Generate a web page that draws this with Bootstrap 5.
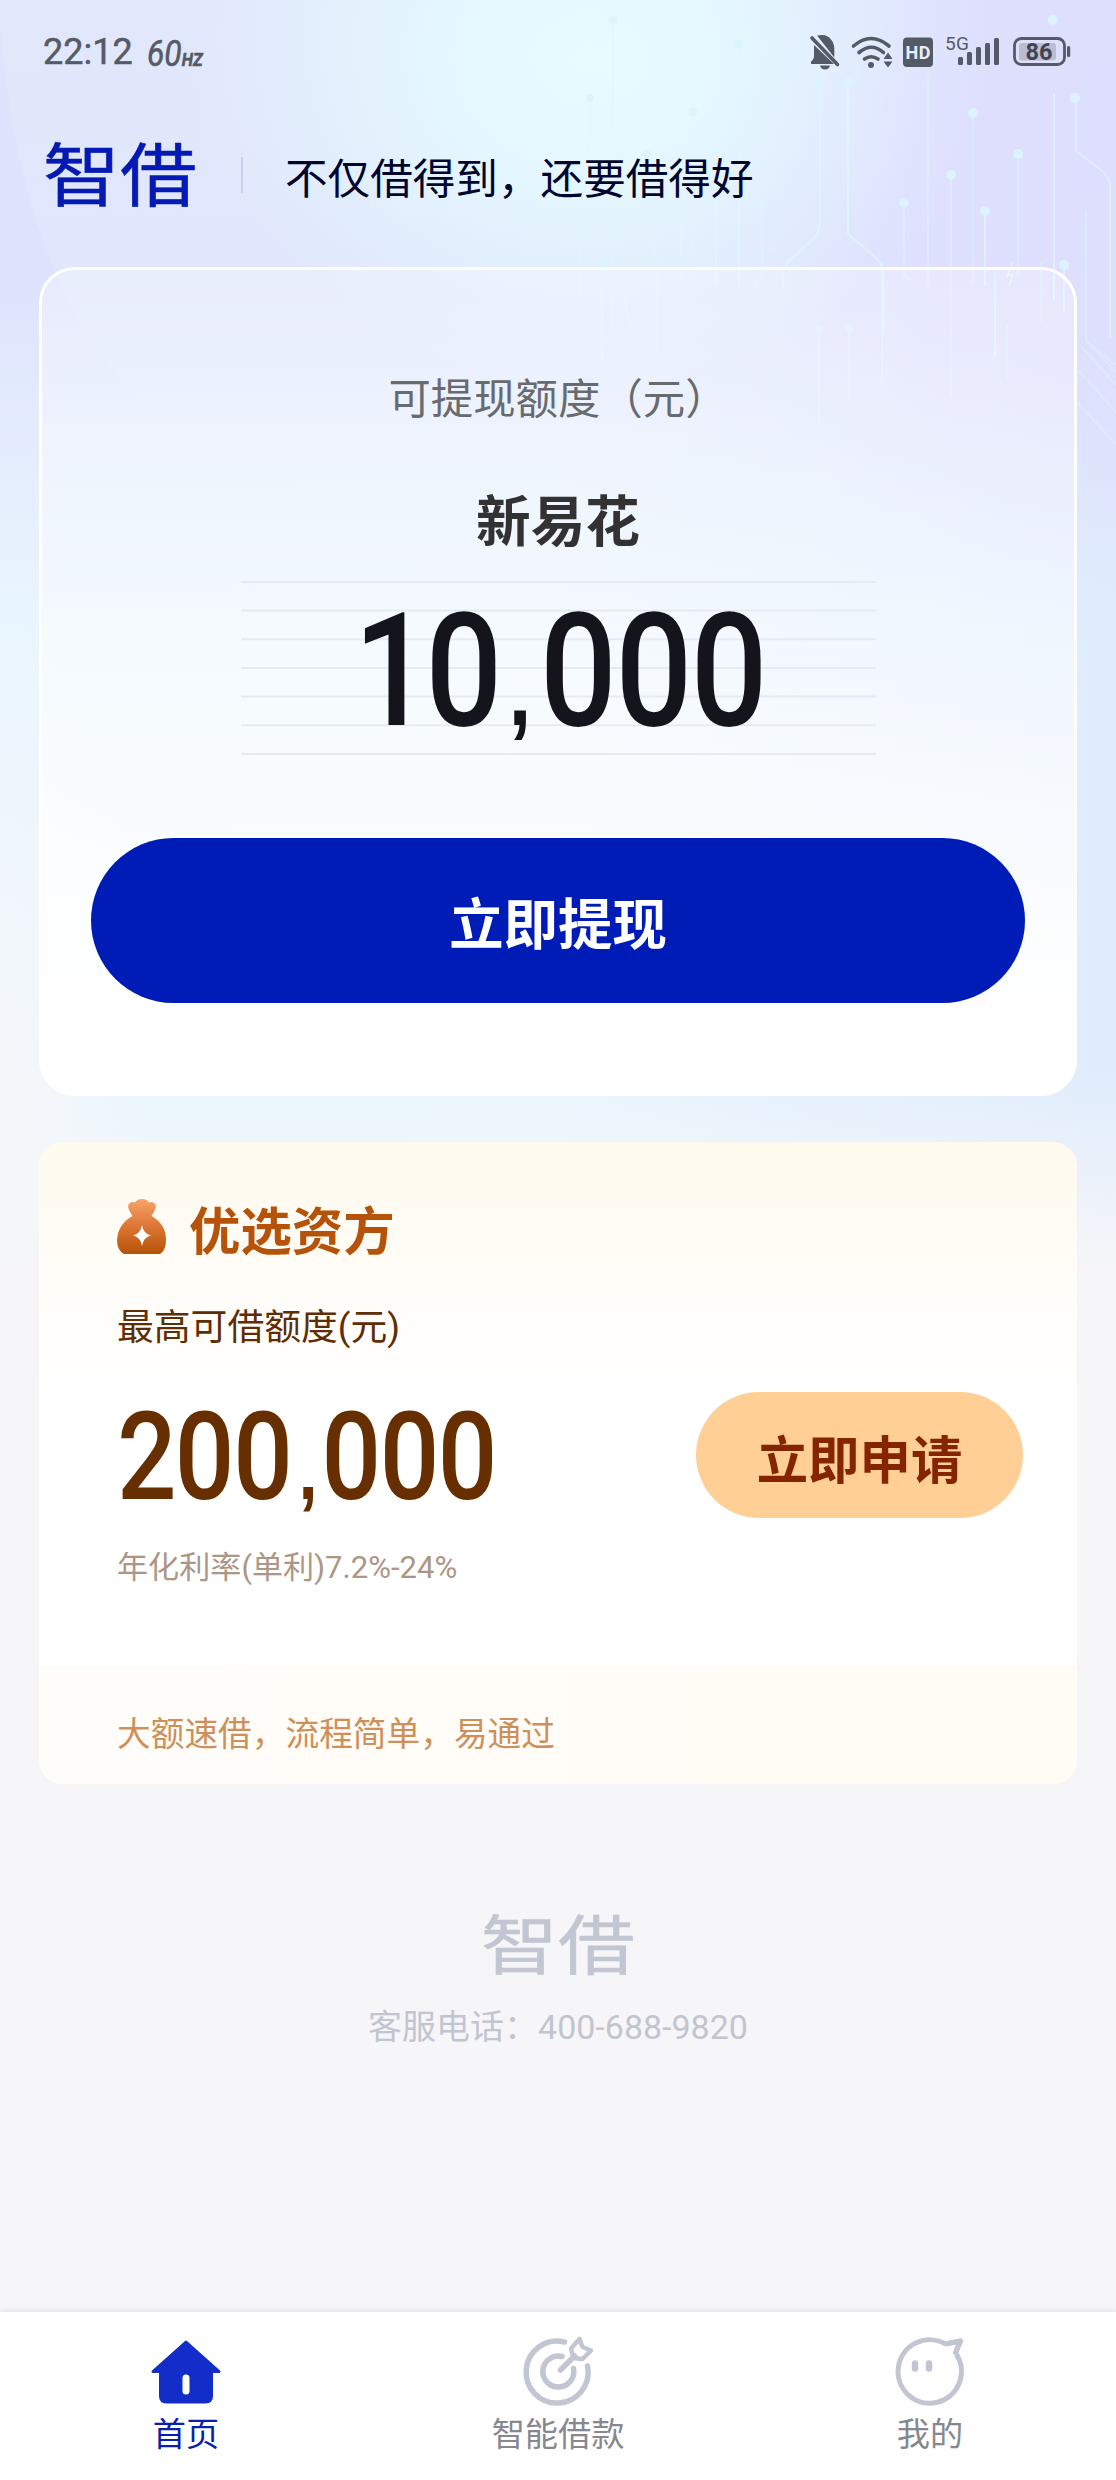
<!DOCTYPE html>
<html lang="zh-CN">
<head>
<meta charset="utf-8">
<meta name="viewport" content="width=device-width, initial-scale=1">
<title>智借</title>
<link rel="stylesheet" href="https://cdn.jsdelivr.net/npm/bootstrap@5.3.0/dist/css/bootstrap.min.css">
<style>
  :root { --cjk: "Noto Sans CJK SC", sans-serif; --mix: Roboto, "Noto Sans CJK SC", sans-serif; }
  body { font-family: var(--cjk); background: #f6f6f8; }
  svg { display: block; overflow: visible; }
  .screen { position: relative; width: 1116px; height: 2480px; overflow: hidden; isolation: isolate; }
  .backdrop { position: absolute; inset: 0 0 auto 0; height: 1300px; z-index: -1;
    background:
      linear-gradient(180deg, rgba(246,246,248,0) 82%, #f6f6f8 98%),
      radial-gradient(ellipse 150px 520px at 0 1120px, rgba(247,248,250,.95) 0, rgba(247,248,250,0) 100%),
      radial-gradient(ellipse 400px 330px at 590px 60px, #e6fcff 0, rgba(229,251,255,.9) 28%, rgba(226,240,252,0) 100%),
      radial-gradient(ellipse 440px 460px at 1116px 130px, #dedefe 0, rgba(222,222,254,.85) 50%, rgba(222,222,254,0) 100%),
      linear-gradient(180deg, #e2e8fb 0, #e0e6fc 290px, rgba(226,234,253,0) 620px),
      linear-gradient(90deg, #e9f5fe 0, #eaf5fe 50%, #dfecfd 100%); }
  .backdrop svg { position: absolute; left: 0; top: 0; }

  .statusbar { height: 70px; padding: 33px 46px 0 43px; color: #555b66; }
  .clock { font: 400 36px/38px Roboto, sans-serif; -webkit-text-stroke: .5px; }
  .hz { margin-left: 14px; transform-origin: 0 50%; transform: scaleX(.86); font: italic 400 37px/42px Roboto, sans-serif; -webkit-text-stroke: .6px; }
  .hz span { font-size: 19px; font-weight: 700; }
  .status-icons { margin-top: -1px; }

  .brandbar { height: 197px; padding: 12px 0 0 45px; align-items: center; }
  .brandbar .rule { width: 2px; height: 36px; margin-left: 45px; background: #ccd0ef; }
  .slogan { margin: 3px 0 0 42px; font-size: 42.6px; line-height: 60px; color: #02062e; }

  .quota { margin: 0 39px; height: 829px; padding: 96px 49px 0; border: 3px solid #fff; border-radius: 36px;
    background: linear-gradient(180deg, rgba(255,255,255,.28) 0, rgba(255,255,255,.42) 35%, rgba(255,255,255,.72) 65%, #fff 92%); }
  .quota-label { font-size: 42.4px; line-height: 60px; color: #696a6e; }
  .quota-name { margin-top: 57px; font-size: 54.6px; line-height: 70px; font-weight: 700; color: #323233; }
  .quota-amount { margin: 28px auto 0; }
  .btn-main { margin-top: 83px; height: 165px; border: 0; font-size: 54.4px; line-height: 166px; font-weight: 700; padding: 0;
    color: #fff; background: #001cb7; }
  .btn-main:hover { color: #fff; background: #001599; }

  .offer { margin: 46px 39px 0; height: 642px; border-radius: 24px; overflow: hidden;
    background: linear-gradient(180deg, #fffaee 0, #fffcf5 90px, #fff 250px); }
  .offer-body { height: 524px; padding: 51px 54px 0 78px; }
  .offer-title { margin-left: 22px; font-size: 51.4px; line-height: 70px; font-weight: 700; color: #b65309; }
  .offer-label { margin-top: 40px; font-size: 36.8px; line-height: 50px; color: #5f2d04; font-family: var(--mix); }
  .offer-row { margin-top: 39px; height: 126px; }
  .btn-apply { width: 327px; height: 126px; border: 0; padding: 0; font-size: 51.4px; line-height: 130px; font-weight: 700;
    color: #842400; background: #ffcf96; }
  .btn-apply:hover { color: #842400; background: #fbc383; }
  .offer-rate { margin-top: 30px; font: 400 31.1px/40px var(--mix); color: #ad9685; }
  .offer-foot { height: 118px; padding: 7px 0 0 78px; font-size: 33.7px; line-height: 118px; color: #cf8f58;
    background: linear-gradient(90deg, #fffdfa, #fffcf5); }

  .service { margin-top: 132px; color: #c2c5d1; }
  .service-tel { margin-top: 28px; font: 400 34px/50px var(--mix); }

  .tabbar { position: absolute; inset: auto 0 0 0; height: 168px; background: #fff; box-shadow: 0 -2px 5px rgba(0,0,0,.07); }
  .tab { padding-top: 22px; font-size: 33.2px; line-height: 50px; color: #87888f; text-decoration: none; }
  .tab svg { margin-bottom: 1px; }
  .tab.on { color: #0b1fae; }
</style>
</head>
<body>
<main class="screen">
  <div class="backdrop">
    <svg width="1116" height="1300" fill="none" stroke="#dff6ff" stroke-width="2">
      <defs><linearGradient id="arc" x1="0" y1="0" x2="0" y2="1"><stop offset="0" stop-color="#dcdffd" stop-opacity=".4"/><stop offset=".6" stop-color="#dcdffd" stop-opacity=".4"/><stop offset="1" stop-color="#dcdffd" stop-opacity="0"/></linearGradient></defs>
      <path d="M0 20Q20 290 150 410L0 410z" fill="url(#arc)" stroke="none"/>
      <g opacity=".45">
        <path d="M613 22V330M590 98v42q0 14-18 24M693 112V285M647 156v70l10 35v90M602 266v100M626 266v45l8 18M681 214v70M580 215v80M762 205v70l-7 12M928 75v210M973 113v170M1018 155v120M1086 210v130l30 32M904 205v70l8 6M951 178v220M1007 325v55M1041 262v60M882 262v120"/>
        <path d="M819 330v95M849 330v70M1080 345l36 40M1078 370l38 42M1075 400l41 44M1085 340l31 25"/>
      </g>
      <path d="M739 45V285M716 200v85M820 84v140q0 10-10 18l-18 16q-9 8-9 18v12M848 84v150l26 22q9 8 9 18v60M985 212v74M1054 94V300M1076 99v52l24 18q10 8 10 18v150M1064 266v45M995 273v85" opacity=".7"/>
      <path d="M1013 262l-6 14 6-2-4 12" stroke="#e4fbff" stroke-width="1.5" opacity=".7"/>
      <g fill="#dcf4ff" stroke="none">
        <circle cx="739" cy="44" r="5"/><circle cx="819" cy="83" r="5"/><circle cx="848" cy="82" r="5"/><circle cx="1053" cy="20" r="5"/>
        <circle cx="1075" cy="98" r="5"/><circle cx="973" cy="113" r="5"/><circle cx="1018" cy="154" r="5"/><circle cx="951" cy="175" r="5"/>
        <circle cx="904" cy="203" r="4.5"/><circle cx="985" cy="211" r="5"/><circle cx="762" cy="204" r="4"/><circle cx="1064" cy="265" r="5"/>
        <circle cx="602" cy="265" r="5"/><circle cx="693" cy="112" r="4.5"/><circle cx="590" cy="98" r="4"/><circle cx="647" cy="154" r="4"/>
        <circle cx="819" cy="329" r="4" opacity=".6"/><circle cx="849" cy="329" r="4" opacity=".6"/><circle cx="613" cy="20" r="4"/>
      </g>
    </svg>
  </div>

  <header>
    <div class="statusbar d-flex">
      <div class="clock">22:12</div>
      <div class="hz">60<span>HZ</span></div>
      <div class="status-icons d-flex ms-auto">
        <svg width="260" height="38" viewBox="810 32 260 38" fill="#555b66">
          <!-- muted bell -->
          <path d="M817 35.500q10-2 14 4 3 3 3.300 9v9zM814 45l20 19H811v-2.500q3-2 3-6zM820 65.500h10q-1 4-5 4t-5-4z"/>
          <path d="M812 38l25.500 26.500" stroke="#555b66" stroke-width="3.600" stroke-linecap="round"/>
          <!-- wifi -->
          <g fill="none" stroke="#555b66" stroke-width="3.600" stroke-linecap="round">
            <path d="M853.500 46q17.500-15 35.500 0M859 52.500q12.500-10.500 24.500 0M864.500 59q6.500-4.500 13.500 0"/>
          </g>
          <circle cx="871" cy="65" r="3"/>
          <path d="M888 52.500l4.500 6.500h-9zM888 67.500l-4.500-6h9z"/>
          <!-- HD -->
          <rect x="903" y="37.500" width="30" height="29.500" rx="4"/>
          <text x="918" y="58.500" text-anchor="middle" font-family="Roboto, sans-serif" font-size="18" font-weight="700" fill="#e8eefb" textLength="25">HD</text>
          <!-- signal -->
          <text x="945" y="49.500" font-family="Roboto, sans-serif" font-size="19" textLength="24">5G</text>
          <g><rect x="958" y="57" width="5" height="8" rx="1.500"/><rect x="967" y="52" width="5" height="13" rx="1.500"/><rect x="976" y="47" width="5" height="18" rx="1.500"/><rect x="985" y="43" width="5" height="22" rx="1.500"/><rect x="994" y="38" width="5" height="27" rx="1.500"/></g>
          <!-- battery -->
          <rect x="1014.500" y="38.500" width="50" height="26" rx="7" fill="none" stroke="#555b66" stroke-width="2.800"/>
          <rect x="1019" y="43" width="37" height="17.500" rx="3" fill="#bcbcd4"/>
          <rect x="1067" y="46" width="3.200" height="11" rx="1.500"/>
          <text x="1039" y="59.500" text-anchor="middle" font-family="Roboto, sans-serif" font-size="23.500" font-weight="700" fill="#41454f">86</text>
        </svg>
      </div>
    </div>

    <div class="brandbar d-flex">
      <svg width="151" height="64" viewBox="0 0 151 64" role="img" aria-label="智借">
        <text transform="scale(1 .9)" x="-2" y="64" font-family="Noto Sans CJK SC, sans-serif" font-size="77" font-weight="400" fill="#0519b4" stroke="#0519b4" stroke-width=".6">智借</text>
      </svg>
      <div class="rule"></div>
      <div class="slogan">不仅借得到，还要借得好</div>
    </div>
  </header>

  <section class="quota text-center">
    <div class="quota-label">可提现额度（元）</div>
    <div class="quota-name">新易花</div>
    <svg class="quota-amount" width="635" height="174" viewBox="0 0 635 174">
      <path d="M0 1h635M0 29.600h635M0 58.300h635M0 87h635M0 115.500h635M0 144.200h635M0 173h635" stroke="#e7eaf2" stroke-width="2"/>
      <text transform="scale(.86 1)" x="131 214.500 311 347.700 435.600 523" y="144" font-family="Roboto, sans-serif" font-size="157" font-weight="500" fill="#14141c">10<tspan font-family="Liberation Sans, sans-serif" font-size="96" font-weight="700">,</tspan>000</text>
    </svg>
    <button class="btn btn-main rounded-pill d-block w-100" type="button">立即提现</button>
  </section>

  <section class="offer">
    <div class="offer-body">
      <div class="d-flex align-items-center">
        <svg width="50" height="56" viewBox="0 0 50 56">
          <defs><linearGradient id="bag" x1="0" y1="0" x2="0" y2="1"><stop offset="0" stop-color="#f9a36a"/><stop offset=".5" stop-color="#db7636"/><stop offset="1" stop-color="#b75207"/></linearGradient></defs>
          <path fill="url(#bag)" d="M15.500 16Q10 8 11.500 4.500 14 1 18 2.500 20-1 25-1t7 3.500Q36 1 38.500 4.500 40 8 34.500 16 49 24 49 40 49 50 43 54H7Q0 50 0 40 1 24 15.500 16z"/>
          <path fill="#fff" d="M25 25q1.500 9 9 10.500-7.500 1.500-9 10.500-1.500-9-9-10.500 7.500-1.500 9-10.500z"/>
        </svg>
        <div class="offer-title">优选资方</div>
      </div>
      <div class="offer-label">最高可借额度(元)</div>
      <div class="offer-row d-flex justify-content-between align-items-center">
        <svg width="380" height="126" viewBox="0 0 380 126">
          <text transform="scale(.86 1)" x="0 67.200 135.200 211 237.800 305.500 373" y="107" font-family="Roboto, sans-serif" font-size="122" font-weight="500" fill="#672e00">200<tspan font-family="Liberation Sans, sans-serif" font-size="80" font-weight="700">,</tspan>000</text>
        </svg>
        <button class="btn btn-apply rounded-pill" type="button">立即申请</button>
      </div>
      <div class="offer-rate">年化利率(单利)7.2%-24%</div>
    </div>
    <div class="offer-foot">大额速借，流程简单，易通过</div>
  </section>

  <footer class="service d-flex flex-column align-items-center">
    <svg width="151" height="58" viewBox="0 0 151 58" role="img" aria-label="智借">
      <text transform="scale(1 .84)" x="-2" y="63" font-family="Noto Sans CJK SC, sans-serif" font-size="77" font-weight="400" fill="#c2c6d2" stroke="#c2c6d2" stroke-width=".6">智借</text>
    </svg>
    <div class="service-tel">客服电话：400-688-9820</div>
  </footer>

  <nav class="tabbar">
    <div class="row g-0 text-center">
      <a class="tab on col-4 d-flex flex-column align-items-center" href="#">
        <svg width="72" height="72" viewBox="150 2334 72 72">
          <path fill="#122dc8" stroke="#122dc8" stroke-width="3" stroke-linejoin="round" d="M186 2342l33 29.500h-7.500V2396q0 6-6 6h-39q-6 0-6-6v-24.500H153z"/>
          <path d="M186 2378v13" stroke="#fff" stroke-width="7" stroke-linecap="round"/>
        </svg>
        首页
      </a>
      <a class="tab col-4 d-flex flex-column align-items-center" href="#">
        <svg width="72" height="72" viewBox="521 2334 72 72" fill="none" stroke="#c2c6d2" stroke-width="5.500" stroke-linecap="round" stroke-linejoin="round">
          <path d="M563.500 2342A31 31 0 1 0 586.500 2366"/>
          <path d="M561 2356.500A15.500 15.500 0 1 0 572.500 2368.500"/>
          <path d="M559.500 2370l14-14"/>
          <path stroke-width="4.500" d="M572.500 2358l-2.500-9.500 8.500-9.500 3 8 8.500 3.500-8.500 8.500z"/>
        </svg>
        智能借款
      </a>
      <a class="tab col-4 d-flex flex-column align-items-center" href="#">
        <svg width="72" height="72" viewBox="894 2334 72 72" fill="none" stroke="#c2c6d2" stroke-width="5" stroke-linecap="round" stroke-linejoin="round">
          <path d="M945.500 2344A31.700 31.700 0 1 0 955.500 2353l5-12z"/>
          <path stroke="#fff" stroke-width="7" d="M946.500 2348.500l6.500 4"/>
          <path d="M945.500 2344l15-3-5 11.500"/>
          <path stroke-width="6.500" d="M915 2363.500v5M929 2363.500v5"/>
        </svg>
        我的
      </a>
    </div>
  </nav>
</main>
<script src="https://cdn.jsdelivr.net/npm/bootstrap@5.3.0/dist/js/bootstrap.bundle.min.js"></script>
</body>
</html>
